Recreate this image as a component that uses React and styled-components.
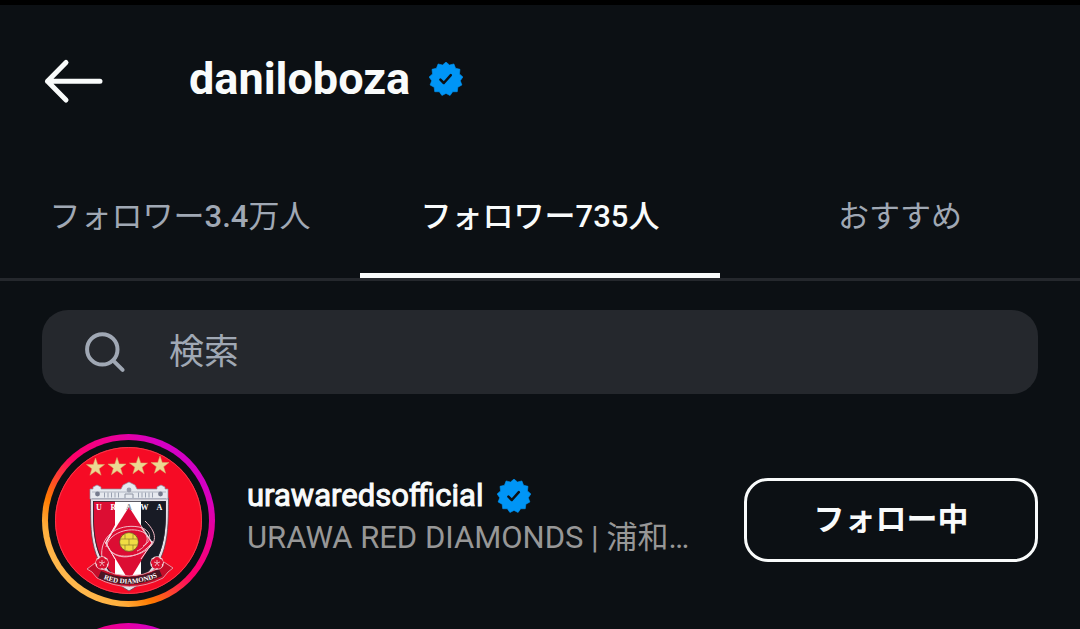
import styled, { createGlobalStyle, css } from "styled-components";

const GlobalStyle = createGlobalStyle`
  * {
    box-sizing: border-box;
  }
  html {
    overflow: hidden;
    background-color: #0c1014;
  }
  body {
    margin: 0;
    color: #f9fbfb;
    font-family: Roboto, "Noto Sans CJK JP", sans-serif;
  }
  button,
  input {
    font-family: inherit;
  }
`;

const Screen = styled.div`
  height: 100vh;
  overflow: hidden;
  border-top: 5px solid #000;
  background-color: #0c1014;
`;

const Header = styled.header`
  display: flex;
  align-items: center;
  height: 152px;
  padding: 0 42px;
`;

const BackButton = styled.button`
  display: flex;
  margin-right: 83px;
  padding: 0;
  border: 0;
  background: none;
  color: inherit;
`;

const Title = styled.h1`
  display: flex;
  align-items: center;
  gap: 19px;
  margin: 0;
  padding-bottom: 4px;
  font-size: 45px;
  line-height: 56px;
  font-weight: 700;
`;

const Tabs = styled.nav`
  display: grid;
  grid-template-columns: repeat(3, 1fr);
  height: 124px;
  border-bottom: 3px solid #25282d;
`;

const Tab = styled.button`
  padding: 4px 0 0;
  border: 0;
  border-bottom: 5px solid transparent;
  background: none;
  color: #a0a8b4;
  font-size: 31px;
  line-height: 40px;
  font-weight: 400;
  ${({ $active }) =>
    $active &&
    css`
      border-color: #f9fbfb;
      color: #f9fbfb;
      font-weight: 500;
    `}
`;

const Count = styled.span`
  font-weight: 500;
`;

const SearchBar = styled.label`
  display: flex;
  align-items: center;
  gap: 43px;
  height: 84px;
  margin: 29px 42px 40px;
  padding: 0 42px;
  border-radius: 26px;
  background-color: #25282d;
  color: #a0a8b4;
`;

const SearchInput = styled.input`
  flex: 1;
  min-width: 0;
  padding: 2px 0 0;
  border: 0;
  outline: none;
  background: none;
  color: #f9fbfb;
  font-size: 35px;
  line-height: 48px;
  &::placeholder {
    color: #a0a8b4;
    opacity: 1;
  }
`;

const List = styled.ul`
  display: flex;
  flex-direction: column;
  gap: 16px;
  margin: 0;
  padding: 0 42px;
  list-style: none;
`;

const Row = styled.li`
  display: flex;
  align-items: center;
`;

const StoryRing = styled.div`
  flex-shrink: 0;
  width: 173px;
  height: 173px;
  padding: 6px;
  border-radius: 50%;
  background: linear-gradient(
    45deg,
    #ffb84d 16%,
    #ffae3c 24%,
    #ff7a00 33%,
    #ff0069 52%,
    #e8009c 72%,
    #d300c5 82%
  );
`;

const Avatar = styled.div`
  height: 100%;
  padding: 7px;
  border-radius: 50%;
  background-color: #0c1014;
  svg {
    display: block;
    width: 100%;
    height: 100%;
  }
`;

const UserInfo = styled.div`
  flex: 1;
  min-width: 0;
  margin: 0 40px 0 32px;
  padding-bottom: 8px;
`;

const UserName = styled.a`
  display: flex;
  align-items: center;
  gap: 14px;
  color: inherit;
  font-size: 31px;
  line-height: 42px;
  text-decoration: none;
  -webkit-text-stroke: 1px currentColor;
`;

const FullName = styled.div`
  overflow: hidden;
  color: #979797;
  font-size: 31px;
  line-height: 42px;
  white-space: nowrap;
`;

const FollowButton = styled.button`
  width: 294px;
  height: 84px;
  margin-bottom: 2px;
  padding: 0 0 6px;
  border: 3px solid #f9fbfb;
  border-radius: 24px;
  background: none;
  color: #f9fbfb;
  font-size: 31px;
  font-weight: 700;
`;

const burst = Array.from({ length: 26 }, (_, i) => {
  const r = i % 2 ? 14.4 : 17;
  const a = (i * Math.PI) / 13;
  return `${(17 + r * Math.sin(a)).toFixed(2)},${(17 - r * Math.cos(a)).toFixed(2)}`;
}).join(" ");

const VerifiedBadge = () => (
  <svg width="34" height="34" viewBox="0 0 34 34" role="img" aria-label="認証済み">
    <polygon points={burst} fill="#0095f6" stroke="#0095f6" strokeWidth="0.6" strokeLinejoin="round" />
    <path
      d="M11.4 17.6 L14.8 21 L21.8 13.2"
      fill="none"
      stroke="#0c1014"
      strokeWidth="2.5"
      strokeLinecap="round"
      strokeLinejoin="round"
    />
  </svg>
);

const BackIcon = () => (
  <svg width="64" height="46" viewBox="0 0 64 46" aria-hidden="true">
    <path
      d="M24 4.5 L5.5 23.3 L24 42 M5.5 23.3 H58"
      fill="none"
      stroke="currentColor"
      strokeWidth="5"
      strokeLinecap="round"
      strokeLinejoin="round"
    />
  </svg>
);

const SearchIcon = () => (
  <svg width="42" height="42" viewBox="0 0 42 42" aria-hidden="true">
    <g fill="none" stroke="currentColor" strokeWidth="4" strokeLinecap="round">
      <circle cx="18.3" cy="18.4" r="15.2" />
      <path d="M29.5 29.8 L38.6 38.8" />
    </g>
  </svg>
);

const star = Array.from({ length: 10 }, (_, i) => {
  const r = i % 2 ? 3.8 : 9.5;
  const a = (i * Math.PI) / 5;
  return `${(r * Math.sin(a)).toFixed(2)},${(-r * Math.cos(a)).toFixed(2)}`;
}).join(" ");

const STARS = [
  [40.5, 20.5],
  [62, 20],
  [83.5, 19],
  [105, 18.5],
];

const LETTERS = [
  ["U", 44, "#fff"],
  ["R", 58.5, "#fff"],
  ["A", 74, "#8a8a92"],
  ["W", 89.5, "#fff"],
  ["A", 104.5, "#fff"],
];

const Flower = ({ x, y }) => (
  <g transform={`translate(${x} ${y})`}>
    <circle r="6.8" fill="#f0d5da" />
    {[0, 72, 144, 216, 288].map((deg) => (
      <circle key={deg} cy="-3" r="3.1" fill="#d8102f" transform={`rotate(${deg})`} />
    ))}
    <path d="M0 0V-3M0 0L3 -1M0 0L2 3M0 0L-2 3M0 0L-3 -1" stroke="#f3c9cf" strokeWidth="0.8" />
  </g>
);

const TeamCrest = () => (
  <svg viewBox="0 0 147 147" role="img" aria-label="urawaredsofficial">
    <defs>
      <clipPath id="shield">
        <path d="M38 54 H111 C111 84 112 119 74 140 C36 119 38 84 38 54 Z" />
      </clipPath>
      <path id="motto" d="M46 131 Q74 143 105 129" />
    </defs>
    <circle cx="73.5" cy="73.5" r="73.5" fill="#f60b25" />
    <circle cx="73.5" cy="73.5" r="73" fill="none" stroke="#f8394c" strokeWidth="1" />
    {STARS.map(([x, y]) => (
      <polygon key={x} points={star} transform={`translate(${x} ${y})`} fill="#ecd792" stroke="#d9ae68" strokeWidth="0.5" />
    ))}

    <path
      d="M35.5 51 H113.5 C113 84 116 121 74 144 C32 121 36 84 35.5 51 Z"
      fill="#e2e2e8"
      stroke="#60404e"
      strokeWidth="0.8"
    />
    <g clipPath="url(#shield)">
      <path d="M30 50 H118 V145 H30 Z" fill="#fff" />
      <path d="M30 50 H60 V78 L50 96 L60 112 V145 H30 Z" fill="#dc0d33" />
      <path d="M86 50 H118 V145 H86 V112 L98 96 L86 78 Z" fill="#181b25" />
      <path d="M74 60 L97 96 L74 134 L51 96 Z" fill="#dc0d33" />
      <path d="M60 80 L51 96 L60 112 M86 80 L97 96 L86 112" fill="none" stroke="#f4e4e9" strokeWidth="1" />
      <path d="M38 54 H111 C111 84 112 119 74 140 C36 119 38 84 38 54 Z" fill="none" stroke="#272531" strokeWidth="1.6" />
    </g>
    <g fill="none" stroke="#f3b9c6" strokeWidth="1">
      <path d="M47 111 C44 90 62 76 84 80 C98 83 97 95 88 99" />
      <path d="M51 100 C54 86 74 79 88 85 C97 91 90 101 82 104" />
      <path d="M52 96 C53 110 72 112 86 106 C101 99 105 88 90 74" />
      <path d="M56 104 C66 116 90 108 98 94" />
    </g>
    <circle cx="74" cy="95" r="9.4" fill="#f0dc43" stroke="#594b26" strokeWidth="0.7" />
    <path
      d="M66 92 H82 M66 98 H82 M70 87 V92 M78 87 V92 M74 92 V98 M70 98 V103 M78 98 V103"
      stroke="#8b7a2c"
      strokeWidth="0.7"
    />

    <path
      d="M35 52 V42 H38 V40 L42 38 L46 40 V42 H66 L68 38 L74 35 L80 38 L82 42 H102 V40 L106 38 L110 40 V42 H113 V52 Z"
      fill="#e6e9ef"
      stroke="#8c8d9c"
      strokeWidth="0.7"
    />
    <path d="M37 45 H111 M37 51.5 H111" stroke="#a4aab9" strokeWidth="0.8" />
    <path d="M49 48 H66 M83 48 H100" stroke="#9aa1b1" strokeWidth="5" strokeDasharray="1 2.5" />
    <circle cx="42.5" cy="47" r="2.4" fill="#757b8d" />
    <circle cx="74" cy="43" r="2.4" fill="#9ba0ae" />
    <circle cx="105.5" cy="47" r="2.4" fill="#757b8d" />
    <path d="M70 51 V47 H78 V51" fill="none" stroke="#8d93a2" strokeWidth="1" />
    <g fontFamily="Liberation Serif, serif" fontSize="8" fontWeight="700" textAnchor="middle">
      {LETTERS.map(([letter, x, fill]) => (
        <text key={x} x={x} y="63" fill={fill}>
          {letter}
        </text>
      ))}
    </g>

    <path
      d="M40 116 L32 122 L37 125 L42 131 Q74 148 108 131 L113 125 L118 121 L109 115 L102 122 Q74 136 47 122 Z"
      fill="#c40d29"
      stroke="#e9a4af"
      strokeWidth="0.9"
    />
    <path d="M46 124 Q74 137 104 122 L107 129 Q74 145 43 131 Z" fill="#4a1523" />
    <Flower x={47} y={116} />
    <Flower x={102} y={116} />
    <text fontFamily="Liberation Serif, serif" fontSize="7" fontWeight="700" fill="#fff" textAnchor="middle">
      <textPath href="#motto" startOffset="50%">
        RED DIAMONDS
      </textPath>
    </text>
  </svg>
);

const App = () => {
  return (
    <>
      <GlobalStyle />
      <Screen>
        <Header>
          <BackButton type="button" aria-label="戻る">
            <BackIcon />
          </BackButton>
          <Title>
            daniloboza
            <VerifiedBadge />
          </Title>
        </Header>
        <Tabs>
          <Tab type="button">
            フォロワー<Count>3.4</Count>万人
          </Tab>
          <Tab type="button" $active>
            フォロワー<Count>735</Count>人
          </Tab>
          <Tab type="button">おすすめ</Tab>
        </Tabs>
        <SearchBar>
          <SearchIcon />
          <SearchInput type="text" placeholder="検索" aria-label="検索" />
        </SearchBar>
        <List>
          <Row>
            <StoryRing>
              <Avatar>
                <TeamCrest />
              </Avatar>
            </StoryRing>
            <UserInfo>
              <UserName href="#urawaredsofficial">
                urawaredsofficial
                <VerifiedBadge />
              </UserName>
              <FullName>URAWA RED DIAMONDS | 浦和…</FullName>
            </UserInfo>
            <FollowButton type="button">フォロー中</FollowButton>
          </Row>
          <Row>
            <StoryRing>
              <Avatar />
            </StoryRing>
          </Row>
        </List>
      </Screen>
    </>
  );
};

export default App;
